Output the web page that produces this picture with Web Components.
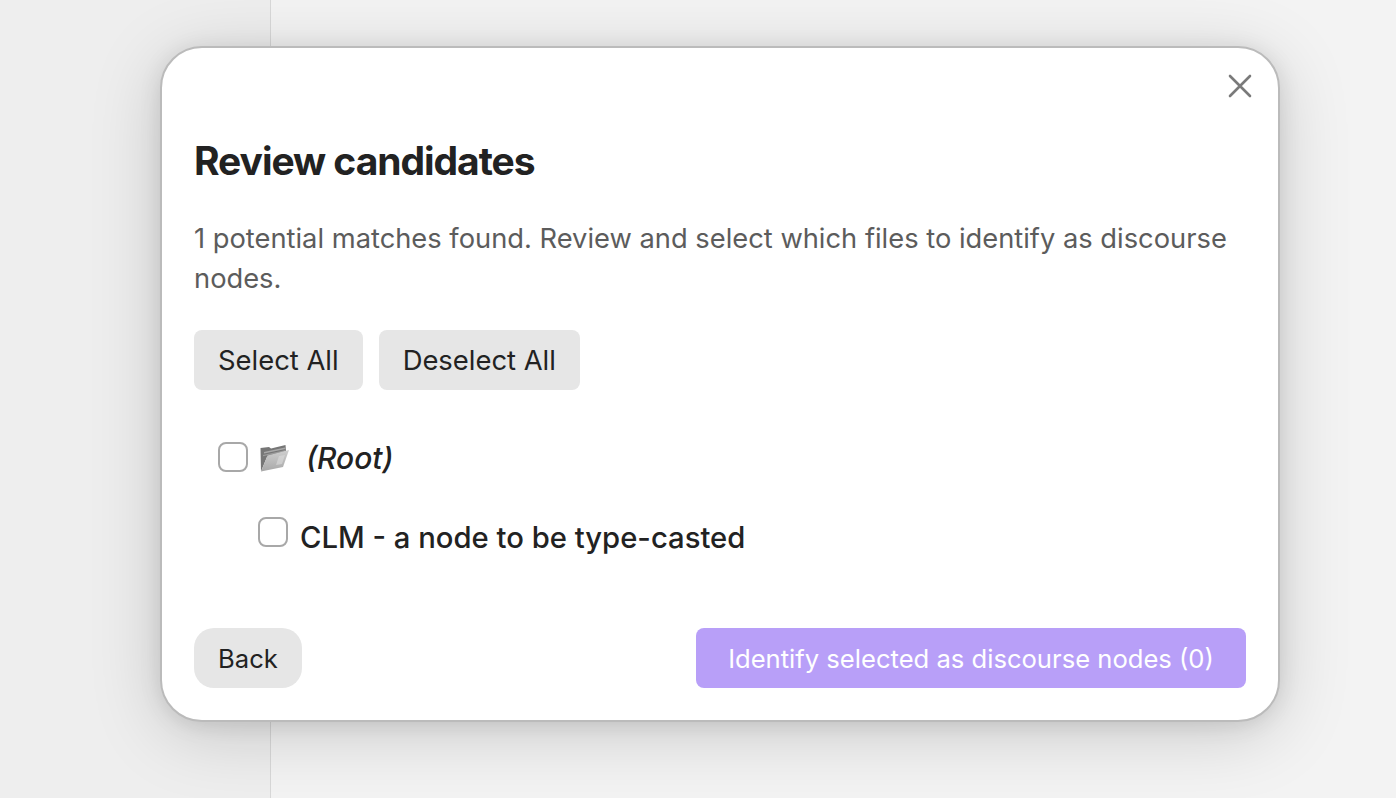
<!DOCTYPE html>
<html><head><meta charset="utf-8"><title>Review candidates</title>
<style>
html,body{margin:0;height:100%;overflow:hidden}
body{font-family:Inter,"Liberation Sans",sans-serif;color:#222}
</style></head><body>
<app-shell>
  <review-modal heading="Review candidates">
    <p>1 potential matches found. Review and select which files to identify as discourse nodes.</p>
    <action-bar slot="actions">
      <soft-button wide>Select All</soft-button>
      <soft-button wide>Deselect All</soft-button>
    </action-bar>
    <folder-group slot="list" name="(Root)">
      <file-row>CLM - a node to be type-casted</file-row>
    </folder-group>
    <soft-button slot="back" pill>Back</soft-button>
    <soft-button slot="submit" accent>Identify selected as discourse nodes (0)</soft-button>
  </review-modal>
</app-shell>
<script>
function def(name, html, init){
  customElements.define(name, class extends HTMLElement{
    constructor(){super();this.attachShadow({mode:'open'}).innerHTML=html;}
    connectedCallback(){if(init)init(this);}
  });
}
def('app-shell',`<style>
:host{display:flex;height:798px;background:#f1f1f1;position:relative;overflow:hidden}
.side{width:270px;background:#eeeeee;border-right:1px solid #d8d8d8;flex:none}
.main{flex:1;background:#f3f3f3}
</style><div class="side"></div><div class="main"></div><slot></slot>`);

def('review-modal',`<style>
:host{position:absolute;left:160px;top:46px;width:1120px;height:676px;box-sizing:border-box;
 background:#fff;border:2px solid #bbb;border-radius:42px;padding:32px;
 display:flex;flex-direction:column;box-shadow:0 12px 70px rgba(0,0,0,.17),0 3px 22px rgba(0,0,0,.1)}
.x{position:absolute;right:26px;top:26px;width:24px;height:24px;display:block}
h1{margin:59px 0 0;font-size:39px;line-height:44px;font-weight:700;letter-spacing:-1.05px;color:#222}
.desc{margin-top:36px;font-size:27.3px;line-height:40px;color:#5c5c5c}
::slotted(p){margin:0}
.actions{margin-top:31px}
.list{margin-top:52px;padding-left:24px;flex:1}
.foot{display:flex;justify-content:space-between;align-items:center}
</style>
<svg class="x" viewBox="0 0 24 24" fill="none" stroke="#7a7a7a" stroke-width="2.6" stroke-linecap="round"><path d="M2 2 L22 22 M22 2 L2 22"/></svg>
<h1></h1>
<div class="desc"><slot></slot></div>
<div class="actions"><slot name="actions"></slot></div>
<div class="list"><slot name="list"></slot></div>
<div class="foot"><slot name="back"></slot><slot name="submit"></slot></div>`,
el=>{el.shadowRoot.querySelector('h1').textContent=el.getAttribute('heading');});

def('action-bar',`<style>
:host{display:flex;gap:16px}
</style><slot></slot>`);

def('soft-button',`<style>
:host{display:inline-flex;align-items:center;justify-content:center;height:60px;padding:0 24px;box-sizing:border-box;
 background:#e6e6e6;border-radius:8px;font-size:25.6px;color:#222}
:host([wide]){font-size:27.4px}
:host([pill]){border-radius:20px;width:108px;padding:0}
:host([accent]){background:#b89ff8;color:#fff;padding:0 32px;width:550px}
</style><slot></slot>`);

def('check-box',`<style>
:host{display:block;width:30px;height:30px;box-sizing:border-box;border:2px solid #a8a8a8;border-radius:8px;background:#fff;flex:none}
</style>`);

def('folder-group',`<style>
:host{display:block}
.head{display:flex;align-items:center;height:30px}
svg{width:32px;height:30px;margin-left:10px;flex:none;display:block}
i{margin-left:16px;font-size:30px;font-weight:500;font-style:italic;color:#222;position:relative;top:1px}
.kids{margin-top:45px;padding-left:40px}
</style>
<div class="head"><check-box></check-box>
<svg viewBox="0 0 32 30"><defs><linearGradient id="f" x1="0" y1="0" x2="0" y2="1"><stop offset="0" stop-color="#cfcfcf"/><stop offset="1" stop-color="#a8a8a8"/></linearGradient></defs>
<path d="M2.5 6 L11 5 L13 6.5 L27.5 3 L28 9 L9 15 L3 29.5 Z" fill="#767676"/>
<path d="M6 10 L27 5.5 L27.5 7 L6 11.5 Z" fill="#a9a9a9"/>
<path d="M5 13 L27.5 8 L27.5 9.2 L5 14.2 Z" fill="#9a9a9a"/>
<path d="M9.5 13.5 L31 8 L25 25 L3 29.5 Z" fill="url(#f)"/>
<path d="M21 14 L27 13 L24 22 L18 23 Z" fill="#dcdcdc" opacity=".6"/></svg>
<i></i></div>
<div class="kids"><slot></slot></div>`,
el=>{el.shadowRoot.querySelector('i').textContent=el.getAttribute('name');});

def('file-row',`<style>
:host{display:flex;align-items:flex-start;font-size:29.25px;font-weight:500;color:#222;line-height:40px}
check-box{margin-right:12px}
span{margin-top:1px}
</style><check-box></check-box><span><slot></slot></span>`);
</script>
</body></html>
